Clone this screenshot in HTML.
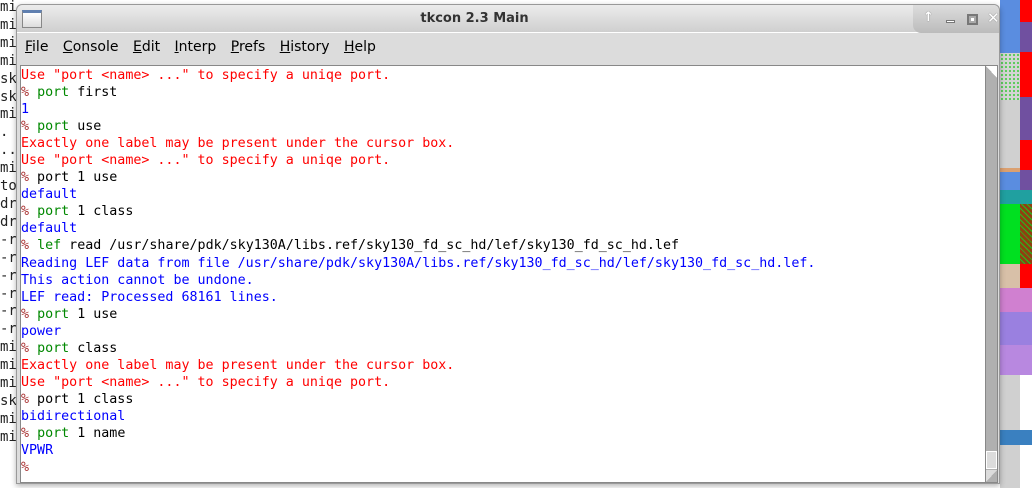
<!DOCTYPE html>
<html><head><style>
*{margin:0;padding:0;box-sizing:border-box}
body{width:1032px;height:488px;overflow:hidden;background:#fff;position:relative;font-family:"DejaVu Sans","Liberation Sans",sans-serif}
.a{position:absolute}
#lt{left:0;top:-1px;font:14px/17.9px "DejaVu Sans Mono",monospace;color:#222;white-space:pre}
#win{left:16px;top:4px;width:984px;height:480px;border:1px solid #999;background:#dcdcdc;border-radius:6px 6px 0 0;box-shadow:0 2px 6px rgba(0,0,0,.3)}
#tb{left:0;top:0;width:982px;height:28px;background:linear-gradient(#ececec,#cfcfcf);border-radius:6px 6px 0 0;border-bottom:1px solid #fff}
#title{left:0;width:915px;top:6px;text-align:center;font-weight:bold;font-size:13px;color:#333}
#menu{left:8px;top:34px;font-size:14px;color:#000}
#menu span{margin-right:10px}
#menu u{text-decoration:underline}
#txt{left:3px;top:60px;width:965px;height:418px;background:#fff;border:1px solid #888;border-right:none;font:13.33px/17.05px "DejaVu Sans Mono",monospace;white-space:pre;padding:1px 0 0 0}
.r{color:#f00}.b{color:#00f}.g{color:#080}.p{color:#a33}
#sb{left:968px;top:60px;width:13px;height:418px;background:#b0b0b0;border:1px solid #888}
</style></head><body>
<div class="a" id="lt">mi
mi
mi
mi
sk
sk
mi
.
..
mi
to
dr
dr
-r
-r
-r
-r
-r
-r
mi
mi
mi
sk
mi
mi</div>
<div class="a" style="left:1000px;top:0;width:20px;height:488px;background:#d0d0d0"></div>
<div class="a" style="left:1000px;top:0;width:20px;height:53px;background:#5a8de0"></div>
<div class="a" style="left:1000px;top:53px;width:20px;height:47px;background:#d4d4d4;background-image:radial-gradient(#5c5 1px,transparent 1.2px);background-size:4px 4px"></div>
<div class="a" style="left:1000px;top:168px;width:20px;height:4px;background:#dba070"></div>
<div class="a" style="left:1000px;top:172px;width:20px;height:18px;background:#5a8de0"></div>
<div class="a" style="left:1000px;top:190px;width:32px;height:14px;background:#20a0a0"></div>
<div class="a" style="left:1000px;top:204px;width:20px;height:60px;background:#00e020"></div>
<div class="a" style="left:1000px;top:264px;width:20px;height:24px;background:#d8c0a8"></div>
<div class="a" style="left:1020px;top:0;width:12px;height:22px;background:#f00"></div>
<div class="a" style="left:1020px;top:22px;width:12px;height:30px;background:#7050a0"></div>
<div class="a" style="left:1020px;top:52px;width:12px;height:45px;background:#f00"></div>
<div class="a" style="left:1020px;top:97px;width:12px;height:43px;background:#7050a0"></div>
<div class="a" style="left:1020px;top:140px;width:12px;height:30px;background:#f00"></div>
<div class="a" style="left:1020px;top:170px;width:12px;height:20px;background:#7050a0"></div>
<div class="a" style="left:1020px;top:204px;width:12px;height:60px;background:repeating-linear-gradient(45deg,#904010 0 3px,#20c020 3px 4px)"></div>
<div class="a" style="left:1020px;top:264px;width:12px;height:24px;background:#f00"></div>
<div class="a" style="left:1000px;top:288px;width:32px;height:24px;background:#d080d0"></div>
<div class="a" style="left:1000px;top:312px;width:32px;height:33px;background:#9a80e0"></div>
<div class="a" style="left:1000px;top:345px;width:32px;height:30px;background:#b888e0"></div>
<div class="a" style="left:1000px;top:430px;width:32px;height:15px;background:#3a80c0"></div>
<div class="a" id="win">
 <div class="a" id="tb">
  <div class="a" style="left:5px;top:5px;width:20px;height:18px;border:1px solid #888;background:linear-gradient(#fff,#ddd);border-top:3px solid #6080b0"></div>
  <div class="a" id="title">tkcon 2.3 Main</div>
  <div class="a" style="left:896px;top:0;width:86px;height:28px;background:linear-gradient(#ddd,#bbb);border-radius:0 6px 0 8px;color:#fff;font-size:13px;font-weight:bold;text-shadow:0 0 1px #555">
   <span class="a" style="left:10px;top:5px">↑</span>
   <span class="a" style="left:33px;top:15px;width:9px;height:3px;background:#fff;border:1px solid #777"></span>
   <span class="a" style="left:54px;top:9px;width:11px;height:11px;border:2px solid #777;background:#fff;box-shadow:inset 0 0 0 2px #aaa"></span>
   <span class="a" style="left:74px;top:4px;font-size:15px">✕</span>
  </div>
 </div>
 <div class="a" id="menu"><span><u>F</u>ile</span> <span><u>C</u>onsole</span> <span><u>E</u>dit</span> <span><u>I</u>nterp</span> <span><u>P</u>refs</span> <span><u>H</u>istory</span> <span><u>H</u>elp</span></div>
 <div class="a" id="txt"><span class="r">Use "port &lt;name&gt; ..." to specify a uniqe port.</span>
<span class="p">%</span> <span class="g">port</span> first
<span class="b">1</span>
<span class="p">%</span> <span class="g">port</span> use
<span class="r">Exactly one label may be present under the cursor box.</span>
<span class="r">Use "port &lt;name&gt; ..." to specify a uniqe port.</span>
<span class="p">%</span> port 1 use
<span class="b">default</span>
<span class="p">%</span> <span class="g">port</span> 1 class
<span class="b">default</span>
<span class="p">%</span> <span class="g">lef</span> read /usr/share/pdk/sky130A/libs.ref/sky130_fd_sc_hd/lef/sky130_fd_sc_hd.lef
<span class="b">Reading LEF data from file /usr/share/pdk/sky130A/libs.ref/sky130_fd_sc_hd/lef/sky130_fd_sc_hd.lef.</span>
<span class="b">This action cannot be undone.</span>
<span class="b">LEF read: Processed 68161 lines.</span>
<span class="p">%</span> <span class="g">port</span> 1 use
<span class="b">power</span>
<span class="p">%</span> <span class="g">port</span> class
<span class="r">Exactly one label may be present under the cursor box.</span>
<span class="r">Use "port &lt;name&gt; ..." to specify a uniqe port.</span>
<span class="p">%</span> port 1 class
<span class="b">bidirectional</span>
<span class="p">%</span> <span class="g">port</span> 1 name
<span class="b">VPWR</span>
<span class="p">%</span></div>
 <div class="a" id="sb">
  <div class="a" style="left:0;top:0;width:11px;height:12px;background:linear-gradient(to top right,#b0b0b0 50%,#fff 50%)"></div>
  <div class="a" style="left:0;top:385px;width:11px;height:18px;background:#dcdcdc;border:1px solid #fff"></div>
  <div class="a" style="left:0;top:404px;width:11px;height:12px;background:linear-gradient(to bottom right,#dcdcdc 50%,#b0b0b0 50%)"></div>
 </div>
</div>
</body></html>
